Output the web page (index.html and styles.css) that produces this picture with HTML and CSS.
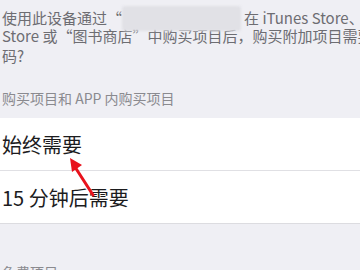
FILE: index.html
```html
<!DOCTYPE html>
<html>
<head>
    <meta charset="UTF-8">
    <title>密码设置</title>
    <link rel="stylesheet" href="styles.css">
</head>
<body>
    <div class="screen">
        <div class="desc">
            <div class="desc-line">使用此设备通过“<span class="blur-box"></span>在 iTunes Store、App</div>
            <div class="desc-line">Store 或“图书商店”中购买项目后，购买附加项目需要密</div>
            <div class="desc-line">码?</div>
        </div>

        <div class="section-header">购买项目和 APP 内购买项目</div>
        <div class="list">
            <div class="cell">始终需要</div>
            <div class="cell">15 分钟后需要</div>
        </div>

        <div class="section-header next">免费项目</div>

        <svg class="arrow" width="40" height="50" viewBox="0 0 40 50">
            <line x1="31" y1="43" x2="13" y2="15" stroke="#e8121c" stroke-width="3" stroke-linecap="round"/>
            <polygon points="8,6 20,13 10,20" fill="#e8121c"/>
        </svg>
    </div>
</body>
</html>
```

FILE: styles.css
```css
body {
    margin: 0;
    background-color: #efeff4;
    font-family: "Noto Sans CJK SC", "Noto Sans", sans-serif;
}
.screen {
    width: 360px;
    height: 270px;
    overflow: hidden;
    position: relative;
}
.desc {
    padding: 6px 0 0 2px;
    color: #6d6d72;
    font-size: 15px;
    line-height: 20px;
}
.desc-line {
    height: 20px;
    white-space: nowrap;
}
.blur-box {
    display: inline-block;
    width: 119px;
    height: 25px;
    margin-right: 3px;
    vertical-align: -7px;
    background-color: #e1e1e6;
    border-radius: 3px;
    filter: blur(1px);
}
.section-header {
    margin-top: 22px;
    padding: 0 0 10px 2px;
    color: #8a8a8f;
    font-size: 14px;
    line-height: 20px;
}
.section-header.next {
    margin-top: 38px;
}
.list {
    background-color: #fff;
    border-bottom: 1px solid #dcdce0;
}
.cell {
    height: 52px;
    padding-left: 2px;
    display: flex;
    align-items: center;
    font-size: 20px;
    color: #1c1c1e;
}
.cell + .cell {
    border-top: 1px solid #e0e0e4;
}
.arrow {
    position: absolute;
    left: 62px;
    top: 152px;
}
```
